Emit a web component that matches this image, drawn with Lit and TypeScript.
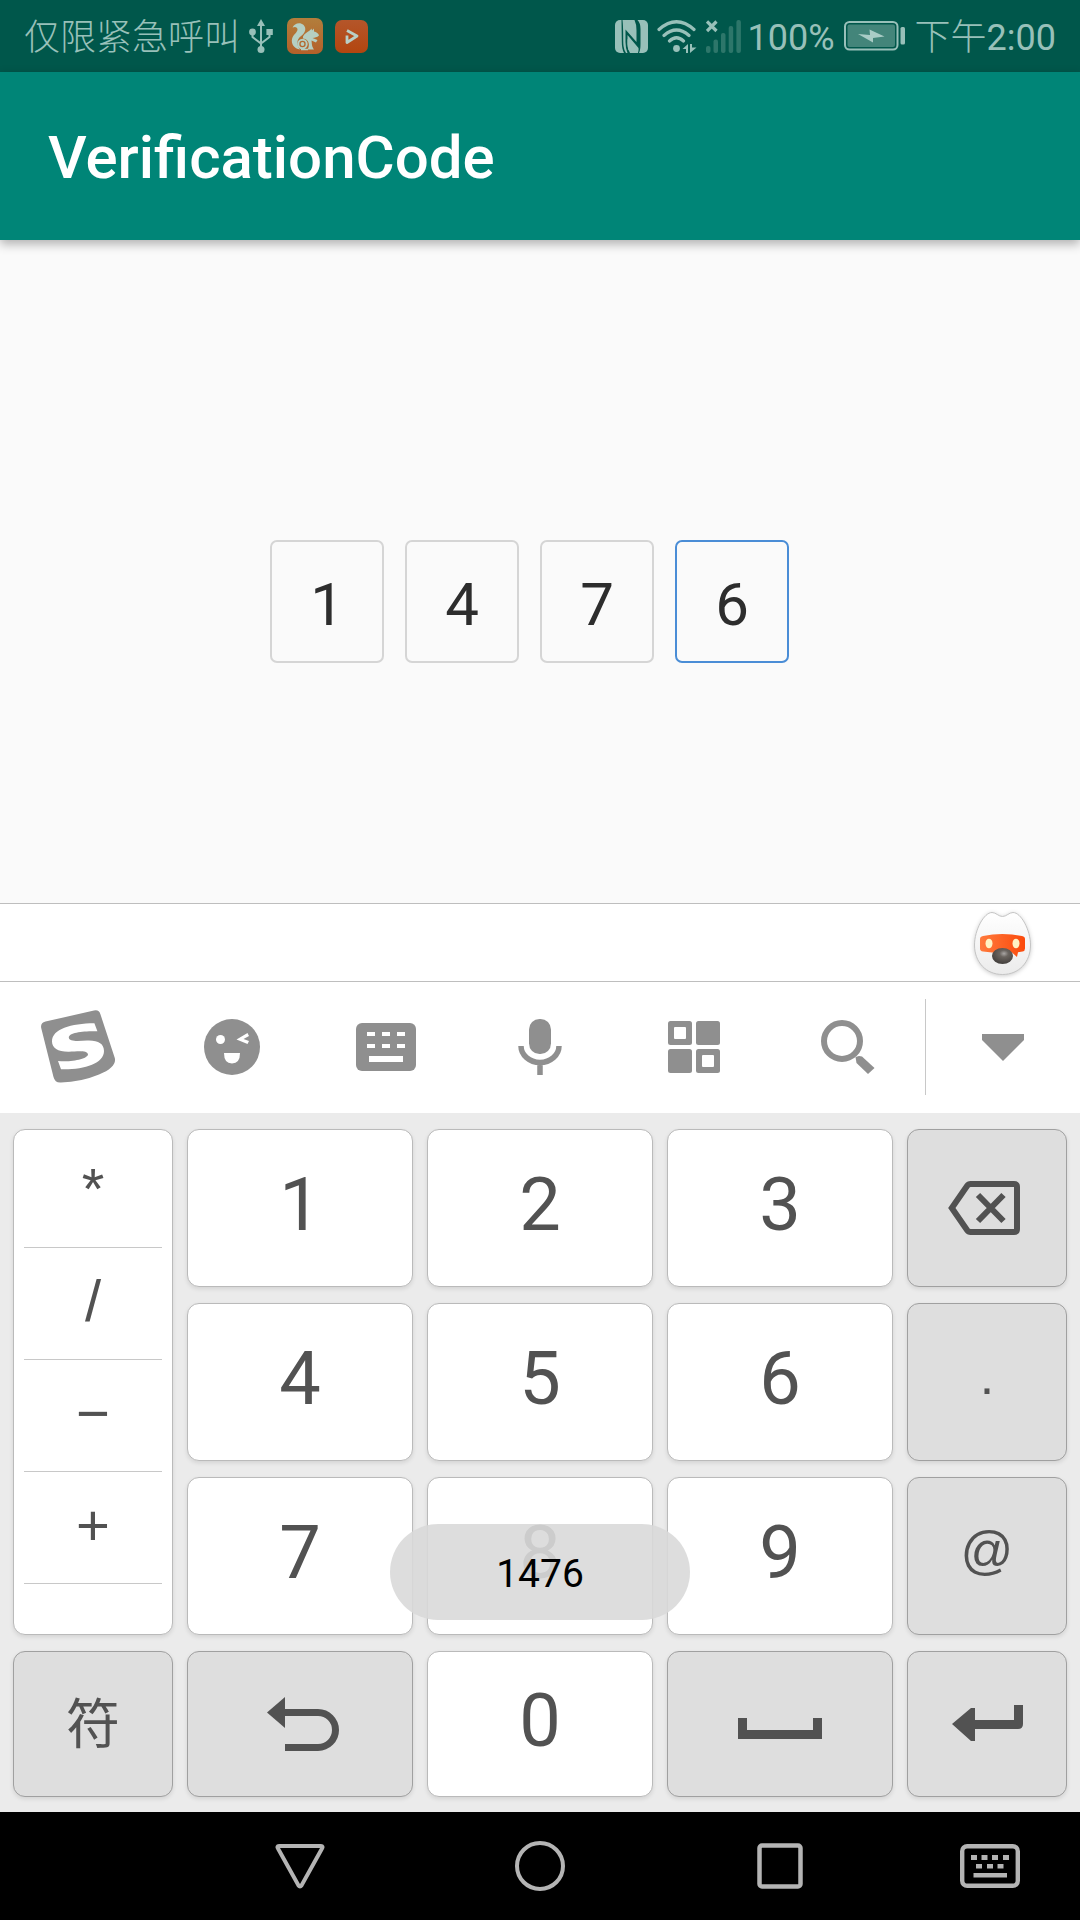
import { LitElement, html, css } from "lit";
import { customElement, property, state } from "lit/decorators.js";

const icons = {
  usb: html`<svg width="24" height="34" viewBox="0 0 24 34" fill="none" stroke="currentColor" stroke-width="2">
    <path d="M12 6V30M3.5 14V18L12 24.5L20.5 18V14" />
    <path d="M12 0L16 7H8Z" fill="currentColor" stroke="none" />
    <circle cx="12" cy="30.5" r="3.5" fill="currentColor" stroke="none" />
    <circle cx="3.5" cy="13" r="3.4" fill="currentColor" stroke="none" />
    <path d="M17.4 10H23.8V16H17.4Z" fill="currentColor" stroke="none" />
  </svg>`,
  squirrel: html`<svg width="36" height="36" viewBox="0 0 36 36">
    <defs><linearGradient id="uc" x1="0" y1="0" x2="0" y2="1"><stop offset="0" stop-color="#b27e3c" /><stop offset="1" stop-color="#b4602a" /></linearGradient></defs>
    <rect width="36" height="36" rx="7" fill="url(#uc)" />
    <g fill="#b5cfc2">
      <path d="M5.6 9.5C7 5.5 13 3.8 16.6 7C20 10.5 18 15.5 13.5 18.5C9.5 21.5 9.5 27 13 31.5C7 30.5 4 26 5 21C6 16.5 10.5 14.5 10.5 11.5C10.5 9 8 8.3 5.6 9.5Z" />
      <path d="M16 18.5C18 14.5 22 14 24.5 10.5L25 12.5L27 10.5V13.5C29.5 14 31.5 15.5 32 17.5C30 19.5 28 19.5 25.5 20L30.5 22L29 24.5L24.5 22.5C25 25.5 24.5 28 27 31.5H20.5C23 27.5 22.5 21.5 16 20.5Z" />
      <circle cx="15.5" cy="26" r="1.9" />
    </g>
    <circle cx="15.5" cy="26" r="4.2" fill="none" stroke="#b5cfc2" stroke-width="2" />
    <path d="M14 31.5H21" stroke="#b5cfc2" stroke-width="1.5" />
  </svg>`,
  play: html`<svg width="33" height="33" viewBox="0 0 33 33">
    <defs><linearGradient id="pl" x1="0" y1="0" x2="0" y2="1"><stop offset="0" stop-color="#b4562a" /><stop offset="1" stop-color="#b3450f" /></linearGradient></defs>
    <rect width="33" height="33" rx="7" fill="url(#pl)" />
    <path d="M12 10.5L22 16L12 22.5V15.5" fill="none" stroke="#b9cfc6" stroke-width="2.8" stroke-linejoin="round" />
  </svg>`,
  nfc: html`<svg width="33" height="33" viewBox="0 0 33 33">
    <rect width="33" height="33" rx="5" fill="currentColor" />
    <g fill="#00574b">
      <path d="M6.5 0H7.5C8.5 8 8 20 8.5 26Q9 30 11 33H9Q6.8 29 6.8 22Z" />
      <path d="M10.5 9.5L21.5 22V10.5Q21.5 4 19.5 0H22.5Q25.5 3 25.5 9V24Q25.5 30 24 33H23Q24 30 23.5 28L12.5 15V24Q12.5 27.5 13.5 30L22 33H12.5Q10.5 28 10.5 22Z" />
    </g>
    <path d="M12.5 19L22.5 29.5V33H15Q12.5 29 12.5 24Z" fill="currentColor" />
  </svg>`,
  wifi: html`<svg width="40" height="33" viewBox="0 0 40 33" fill="none" stroke="currentColor" stroke-width="3.2" stroke-linecap="round">
    <path d="M2 9.5Q19.5 -6 37 9.5M7 15.5Q19.5 4.5 32 15.5M12.5 21Q19.5 14.5 26.5 21" />
    <circle cx="19.5" cy="28.5" r="3.4" fill="currentColor" stroke="none" />
    <path d="M31 24V33H29V29H25.5ZM33 33V24H35V27.5H39.5Z" fill="currentColor" stroke="none" />
  </svg>`,
  signal: html`<svg width="36" height="33" viewBox="0 0 36 33">
    <g fill="#2d766a"><rect y="26" width="4.5" height="7" rx="2" /><rect x="7.5" y="19.5" width="4.5" height="13.5" rx="2" /><rect x="15" y="13" width="4.5" height="20" rx="2" /><rect x="22.7" y="6" width="4.5" height="27" rx="2" /><rect x="30.4" width="4.5" height="33" rx="2" /></g>
    <path d="M1 1.5L10.5 11M10.5 1.5L1 11" stroke="currentColor" stroke-width="3.2" />
  </svg>`,
  battery: html`<svg width="62" height="30" viewBox="0 0 62 30">
    <rect x="1" y="1" width="52.5" height="27.5" rx="4.5" fill="none" stroke="currentColor" stroke-width="2" />
    <rect x="3.5" y="3.5" width="47.5" height="22.5" rx="2" fill="#43857a" />
    <path d="M14 13L26 14L25.5 8.5L40.5 15.5L29 17L29 21.5Z" fill="#a9ccc6" />
    <rect x="56.5" y="6" width="4.5" height="17.5" rx="1.5" fill="currentColor" />
  </svg>`,
  mascot: html`<svg class="mascot" width="57" height="63" viewBox="0 0 57 63">
    <defs>
      <linearGradient id="face" x1="0" y1="0" x2="0" y2="1"><stop offset="0" stop-color="#fff" /><stop offset="1" stop-color="#ebebeb" /></linearGradient>
      <linearGradient id="mask" x1="0" y1="0" x2="1" y2="0"><stop offset="0" stop-color="#ff7a3c" /><stop offset="1" stop-color="#fb4a0c" /></linearGradient>
      <radialGradient id="nose" cx=".57" cy=".35" r=".6"><stop offset="0" stop-color="#a9a6a4" /><stop offset=".35" stop-color="#6b6560" /><stop offset="1" stop-color="#474340" /></radialGradient>
    </defs>
    <path d="M28.5 4.5C24.5 4.5 22 .5 18 .5C10 .5 .5 18 .5 33C.5 50 12 62.5 28.5 62.5C45 62.5 56.5 50 56.5 33C56.5 18 47 .5 39 .5C35 .5 32.5 4.5 28.5 4.5Z" fill="url(#face)" stroke="#c4c4c4" />
    <path d="M6 27Q6 24.5 9 24Q28 20 48 24Q51 24.5 51 27V36.5Q51 39 48.5 39.5L44 40.2L43 45L38 40.5H18L9 39.5Q6 39 6 36.5Z" fill="url(#mask)" />
    <ellipse cx="15" cy="31.5" rx="3.5" ry="4.8" fill="#fff3c4" />
    <ellipse cx="42" cy="31.5" rx="3.5" ry="4.8" fill="#fff3c4" />
    <ellipse cx="28.5" cy="44" rx="10.5" ry="8" fill="url(#nose)" />
  </svg>`,
  sogou: html`<svg width="75" height="73" viewBox="0 0 75 73">
    <path d="M.2 18Q-.8 12.8 4.5 11.5L53 .6Q58 -.6 59.5 4.5L73.8 48Q76 57 58 64.5Q40 72 20 72.5Q14 73 12.5 67Z" fill="currentColor" />
    <path d="M53.4 13.3L56.4 21.3C42 21 28 22.5 27.8 27.5C28 32 38 31 46 30.5C57 30 63 33.5 63 41C63 54 42 60 20 59.3L17 51C30 52.5 47 49 47 44.3C46 40 36 41.5 28 41.8C17 42 11 38 11 31.5C11 19 30 13.5 53.4 13.3Z" fill="#fff" />
  </svg>`,
  smile: html`<svg width="56" height="56" viewBox="0 0 56 56">
    <circle cx="28" cy="28" r="28" fill="currentColor" />
    <g fill="#fff"><circle cx="16.5" cy="20.5" r="4.5" /><path d="M32.5 20.5L43.5 14L45 17L39.5 20L45 22L43.5 25ZM20 34H36Q36 44.5 28 44.5Q20 44.5 20 34Z" /></g>
  </svg>`,
  keyboard: html`<svg width="60" height="48" viewBox="0 0 60 48">
    <rect width="60" height="48" rx="6" fill="currentColor" />
    <path d="M11 9H19V13H11ZM26 9H34V13H26ZM41 9H49V13H41ZM11 21H19V25H11ZM26 21H34V25H26ZM41 21H49V25H41ZM13 33H47V39H13Z" fill="#fff" />
  </svg>`,
  mic: html`<svg width="44" height="56" viewBox="0 0 44 56">
    <rect x="11" width="22" height="35" rx="10.5" fill="currentColor" />
    <path d="M3 27A19 16.5 0 0 0 41 27M22 43V56" fill="none" stroke="currentColor" stroke-width="5.5" />
  </svg>`,
  grid: html`<svg width="52" height="52" viewBox="0 0 52 52">
    <g fill="currentColor"><rect width="24" height="24" rx="2.5" /><rect x="28" width="24" height="24" rx="2.5" /><rect y="28" width="24" height="24" rx="2.5" /><rect x="28" y="28" width="24" height="24" rx="2.5" /></g>
    <g fill="#fff"><rect x="6" y="6" width="12" height="12" rx="1" /><rect x="34" y="34" width="12" height="12" rx="1" /></g>
  </svg>`,
  search: html`<svg width="54" height="54" viewBox="0 0 54 54">
    <circle cx="21" cy="21" r="18" fill="none" stroke="currentColor" stroke-width="6" />
    <path d="M34.5 37L38 36L41 36.5L53.5 48L47 54L35.5 43Z" fill="currentColor" />
  </svg>`,
  collapse: html`<svg width="42" height="27" viewBox="0 0 42 27"><path d="M0 0H42V6L21 27L0 6Z" fill="currentColor" /></svg>`,
  backspace: html`<svg width="78" height="54" viewBox="0 0 78 54" fill="none" stroke="currentColor" stroke-width="6">
    <path d="M22.5 3H66Q69 3 69 6V48Q69 51 66 51H22.5Q20.5 51 19 49L3.8 27L19 5Q20.5 3 22.5 3ZM30 14L55.5 40M55.5 14L30 40" />
  </svg>`,
  back: html`<svg width="78" height="54" viewBox="-6 0 78 54">
    <path d="M18 15.5H51A17.5 17.5 0 0 1 51 50.5H18" fill="none" stroke="currentColor" stroke-width="7" />
    <path d="M0 15.5L18 0V31Z" fill="currentColor" />
  </svg>`,
  space: html`<svg width="84" height="30" viewBox="0 0 84 30"><path d="M0 9H9V21H75V9H84V30H0Z" fill="currentColor" /></svg>`,
  enter: html`<svg width="71" height="38" viewBox="0 0 71 38"><path d="M0 19L19 3H23V15H62V0H71V19Q71 24 66 24H23V36H19Z" fill="currentColor" /></svg>`,
  navBack: html`<svg width="50" height="46" viewBox="0 0 50 46"><path d="M4 3H46Q48.5 3 47 5.5L26.5 42.5Q25 44.5 23.5 42.5L3 5.5Q1.5 3 4 3Z" fill="none" stroke="currentColor" stroke-width="4" /></svg>`,
  navHome: html`<svg width="50" height="50" viewBox="0 0 50 50"><circle cx="25" cy="25" r="23" fill="none" stroke="currentColor" stroke-width="4" /></svg>`,
  navRecent: html`<svg width="46" height="46" viewBox="0 0 46 46"><rect x="2.5" y="2.5" width="41" height="41" rx="2.5" fill="none" stroke="currentColor" stroke-width="4.5" /></svg>`,
  navKeyboard: html`<svg width="60" height="44" viewBox="0 0 60 44">
    <rect x="2.2" y="2.2" width="55.6" height="39.6" rx="5" fill="none" stroke="currentColor" stroke-width="4.4" />
    <path d="M11 11H17V16H11ZM21.5 11H27.5V16H21.5ZM32 11H38V16H32ZM43 11H49V16H43ZM16 20H22V24.5H16ZM27 20H33V24.5H27ZM37.5 20H43.5V24.5H37.5ZM13.5 29H47V33.5H13.5Z" fill="currentColor" />
  </svg>`,
};

@customElement("status-bar")
class StatusBar extends LitElement {
  static styles = css`
    :host { display: block; }
    .bar {
      display: flex; align-items: center; justify-content: space-between;
      height: 72px; padding: 0 24px; background: #00574b; color: #98c0b9;
      font: 400 36px/68px Roboto, "Noto Sans CJK SC", sans-serif;
    }
    .left, .right, .group { display: flex; align-items: center; gap: 9px; }
    .left { gap: 14px; }
    .right { gap: 5px; }
    .apps { gap: 12px; }
    .text { padding: 4px 0 0; }
    .han { font-weight: 300; }
    svg { display: block; }
  `;
  render() {
    return html`<header class="bar">
      <div class="left">
        <div class="group"><span class="text han">仅限紧急呼叫</span>${icons.usb}</div>
        <div class="group apps">${icons.squirrel}${icons.play}</div>
      </div>
      <div class="right">
        <div class="group">${icons.nfc}${icons.wifi}${icons.signal}</div>
        <div class="group"><span class="text">100%</span>${icons.battery}<time class="text"><span class="han">下午</span>2:00</time></div>
      </div>
    </header>`;
  }
}

@customElement("code-field")
class CodeField extends LitElement {
  @property({ type: String }) value = "";
  static styles = css`
    :host { display: block; }
    .cells { display: flex; justify-content: center; }
    .cell {
      box-sizing: border-box; width: 114px; height: 123px; margin: 0 21px 0 0;
      padding: 6px 0 0; border: 2px solid #d5d5d5; border-radius: 7px;
      background: transparent; color: #2d2d2d; outline: none;
      font: 400 60px/72px Roboto, sans-serif; text-align: center;
    }
    .active { border-color: #4a8dd6; }
  `;
  render() {
    const digits = [...this.value];
    return html`<div class="cells" role="group" aria-label="Verification code">
      ${digits.map((d, i) => html`<input
        class="cell ${i === digits.length - 1 ? "active" : ""}"
        type="text" inputmode="numeric" maxlength="1" aria-label="Digit ${i + 1}" .value=${d} />`)}
    </div>`;
  }
}

@customElement("number-keyboard")
class NumberKeyboard extends LitElement {
  static styles = css`
    :host { display: block; }
    button {
      display: flex; align-items: center; justify-content: center; box-sizing: border-box;
      min-width: 0; margin: 0; padding: 0; border: 0; background: none; color: inherit; cursor: pointer;
    }
    svg { display: block; }
    .candidates {
      display: flex; align-items: center; justify-content: flex-end;
      box-sizing: border-box; height: 79px; padding: 2px 49px 0 0;
      border: solid #bebebe; border-width: 1px 0; background: #fff;
    }
    .mascot { overflow: visible; filter: drop-shadow(0 1px 2px rgba(0, 0, 0, 0.2)); }
    .tools {
      display: grid; grid-template-columns: repeat(6, minmax(0, 154fr)) minmax(0, 155fr);
      box-sizing: border-box; height: 131px; padding: 0 0 2px 1px; background: #fff; color: #8f8f8f;
    }
    .close { height: 96px; padding: 2px 0 0; align-self: center; border-left: 1px solid #c8c8c8; }
    .keys {
      display: grid; gap: 16px 14px;
      grid-template-columns: 160fr repeat(3, 226fr) 160fr;
      grid-template-rows: repeat(3, 158px) 146px;
      padding: 16px 13px 15px; background: #ebebeb; color: #525252;
    }
    .key, .symbols {
      border: 1px solid #bababa; border-radius: 12px; background: #fff;
      box-shadow: 0 2px 4px rgba(0, 0, 0, 0.1);
    }
    .key { padding: 0 0 6px; font: 400 74px/84px Roboto, sans-serif; }
    .dark { padding: 0; border-color: #a0a0a0; background: #dedede; }
    .sign { padding: 0 0 12px; font: 400 52px/60px "Liberation Sans", sans-serif; }
    .han { padding: 0 0 6px; font: 400 54px/60px "Noto Sans CJK SC", sans-serif; }
    .symbols { display: flex; flex-direction: column; grid-row: span 3; min-width: 0; padding: 6px 10px 0; }
    .symbol {
      height: 112px; padding: 0 0 6px; border-bottom: 1px solid #c8c8c8;
      font: 400 58px/66px "Liberation Sans", sans-serif;
    }
  `;
  private digit(n: number) {
    return html`<button class="key">${n}</button>`;
  }
  render() {
    const tools = [
      ["Input menu", icons.sogou], ["Emoji", icons.smile], ["Layout", icons.keyboard],
      ["Voice", icons.mic], ["Panels", icons.grid], ["Search", icons.search],
    ] as const;
    return html`
      <div class="candidates"><button aria-label="Assistant">${icons.mascot}</button></div>
      <div class="tools">
        ${tools.map(([label, icon]) => html`<button aria-label=${label}>${icon}</button>`)}
        <button class="close" aria-label="Hide keyboard">${icons.collapse}</button>
      </div>
      <div class="keys">
        <div class="symbols">${["*", "/", "−", "+"].map((s) => html`<button class="symbol">${s}</button>`)}</div>
        ${[1, 2, 3].map((n) => this.digit(n))}
        <button class="key dark" aria-label="Delete">${icons.backspace}</button>
        ${[4, 5, 6].map((n) => this.digit(n))}
        <button class="key dark sign">.</button>
        ${[7, 8, 9].map((n) => this.digit(n))}
        <button class="key dark sign">@</button>
        <button class="key dark han">符</button>
        <button class="key dark" aria-label="Back">${icons.back}</button>
        ${this.digit(0)}
        <button class="key dark" aria-label="Space">${icons.space}</button>
        <button class="key dark" aria-label="Enter">${icons.enter}</button>
      </div>`;
  }
}

@customElement("nav-bar")
class NavBar extends LitElement {
  static styles = css`
    :host { display: block; }
    .bar {
      display: grid; grid-template-columns: 180fr repeat(3, 240fr) 180fr;
      height: 108px; background: #000; color: #b4b4b4;
    }
    button {
      display: flex; align-items: center; justify-content: center;
      padding: 0; border: 0; background: none; color: inherit; cursor: pointer;
    }
    .first { grid-column: 2; }
    svg { display: block; }
  `;
  render() {
    return html`<nav class="bar">
      <button class="first" aria-label="Back">${icons.navBack}</button>
      <button aria-label="Home">${icons.navHome}</button>
      <button aria-label="Recent apps">${icons.navRecent}</button>
      <button aria-label="Switch keyboard">${icons.navKeyboard}</button>
    </nav>`;
  }
}

@customElement("app-root")
class AppRoot extends LitElement {
  @state() private code = "1476";
  static styles = css`
    :host { display: block; }
    .screen { position: relative; display: flex; flex-direction: column; min-height: 100vh; background: #fafafa; }
    .appbar {
      display: flex; align-items: center; box-sizing: border-box; height: 168px; padding: 4px 48px 0;
      background: #008577; color: #fff; box-shadow: 0 4px 10px rgba(0, 0, 0, 0.3);
    }
    .title { margin: 0; font: 500 60px/72px Roboto, sans-serif; }
    .content { flex: 1; padding: 300px 0 0; }
    .toast {
      position: absolute; right: 0; bottom: 300px; left: 0;
      display: flex; justify-content: center; pointer-events: none;
    }
    .bubble {
      box-sizing: border-box; min-width: 300px; height: 96px; padding: 2px 48px 0; border-radius: 48px;
      background: rgba(217, 217, 217, 0.9); color: #000; text-align: center;
      font: 400 39px/96px Roboto, sans-serif;
    }
  `;
  render() {
    return html`<div class="screen">
      <status-bar></status-bar>
      <div class="appbar"><h1 class="title">VerificationCode</h1></div>
      <main class="content"><code-field .value=${this.code}></code-field></main>
      <number-keyboard></number-keyboard>
      <nav-bar></nav-bar>
      <div class="toast" role="status"><div class="bubble">${this.code}</div></div>
    </div>`;
  }
}
